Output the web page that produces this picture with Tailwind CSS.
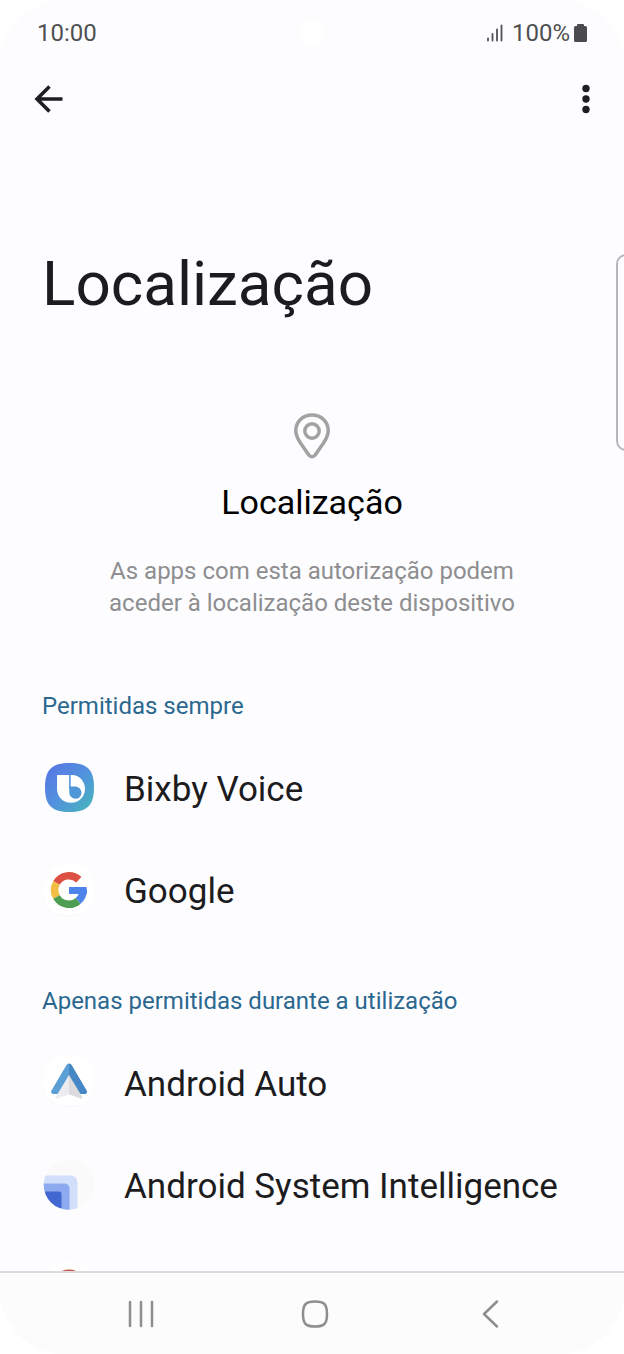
<!DOCTYPE html>
<html lang="pt">
<head>
<meta charset="utf-8">
<meta name="viewport" content="width=device-width, initial-scale=1">
<title>Localização</title>
<script src="https://cdn.jsdelivr.net/npm/@tailwindcss/browser@4"></script>
</head>
<body class="bg-white">
<div class="relative flex h-screen flex-col overflow-hidden rounded-[64px] bg-[#fdfdff] font-['Roboto',sans-serif] text-[#1c1c1e]">
  <header class="shrink-0">
    <div class="relative flex h-16 items-center justify-between px-[37px] pt-0.5 text-2xl text-[#505052]">
      <time>10:00</time>
      <span class="absolute left-1/2 size-6 -translate-x-1/2 rounded-full bg-white"></span>
      <div class="flex items-center">
        <svg class="mr-2 h-[18px] w-[18px]" viewBox="0 0 18 18" fill="none" stroke="#505052" stroke-width="1.8" stroke-linecap="round" aria-hidden="true"><path d="M2 14.500v2M6.500 10v6.500M11 5.500v11M15.500 1.500v15"/></svg>
        <span>100%</span>
        <svg class="ml-1 h-[18px] w-[13px]" viewBox="0 0 13 18" fill="#4b4b4d" aria-hidden="true"><path d="M4 0h5q1 0 1 1v1h1.500q1.500 0 1.500 1.500v13q0 1.500-1.500 1.500h-10Q0 18 0 16.500v-13Q0 2 1.500 2H3V1q0-1 1-1z"/></svg>
      </div>
    </div>
    <div class="flex h-[70px] items-center justify-between pl-7 pr-[18px]">
      <button type="button" aria-label="Voltar" class="flex size-10 items-center justify-center">
        <svg class="size-10" viewBox="0 0 40 40" fill="none" stroke="#1f1f21" stroke-width="3.600" aria-hidden="true"><path d="M34.500 20H9M21.500 7.500 9 20l12.500 12.500"/></svg>
      </button>
      <button type="button" aria-label="Mais opções" class="flex size-10 items-center justify-center">
        <svg class="size-10" viewBox="0 0 40 40" fill="#1f1f21" aria-hidden="true"><circle cx="20" cy="9.500" r="3.700"/><circle cx="20" cy="20" r="3.700"/><circle cx="20" cy="30.500" r="3.700"/></svg>
      </button>
    </div>
  </header>

  <main class="min-h-0 flex-1 overflow-hidden px-[42px] pt-[110px]">
    <h1 class="text-[62px] leading-20">Localização</h1>

    <section class="flex flex-col items-center pt-[86px] text-center">
      <svg class="h-[52px] w-11" viewBox="0 0 44 52" fill="none" stroke="#a2a2a2" stroke-width="3.500" stroke-linejoin="round" aria-hidden="true"><path d="M22 5C12.700 5 5.800 12 5.800 20.800c0 5 2.200 8.800 5.200 13L18.800 45c1.800 2.200 4.600 2.200 6.400 0L33 33.800c3-4.200 5.200-8 5.200-13C38.200 12 31.300 5 22 5z"/><circle cx="22" cy="21" r="7.200"/></svg>
      <h2 class="mt-4 text-[34px] leading-12 text-black">Localização</h2>
      <p class="mt-[29px] text-2xl leading-8 text-[#8e8e90]">As apps com esta autorização podem<br>aceder à localização deste dispositivo</p>
    </section>

    <section class="pt-[71px]">
      <h3 class="text-2xl leading-8 text-[#2b6890]">Permitidas sempre</h3>
      <ul class="pt-[15px]">
        <li><a href="#bixby" class="flex h-[102px] items-center gap-7">
          <svg class="size-[54px] shrink-0" viewBox="0 0 54 54" aria-hidden="true"><defs><linearGradient id="bx" x1="0" y1="0" x2="1" y2="1"><stop stop-color="#5973e4"/><stop offset=".5" stop-color="#5291de"/><stop offset="1" stop-color="#46b9b9"/></linearGradient></defs><path fill="url(#bx)" d="M27.500 2C45 2 52 8.500 52 26.500S45 51 27.500 51 3 44.500 3 26.500 10 2 27.500 2z"/><path fill="#fff" d="M15 14h12.400v14H30V14C37 14 43 20 43 27.800 43 36 37 41.700 29 41.700S15 36 15 27.500z"/><path fill="#5097d8" d="M27.300 14h1.400v14h-1.400z"/><path fill="#fff" d="M28.700 14H30v12h-1.300z"/><path fill="#5097d8" d="M27.300 25.600h5.900a6.100 6.100 0 1 1-5.900 6.100z"/></svg>
          <span class="pt-1 text-[35px]">Bixby Voice</span></a></li>
        <li><a href="#google" class="flex h-[102px] items-center gap-7">
          <svg class="size-[54px] shrink-0" viewBox="0 0 54 54" aria-hidden="true"><path fill="#f7f7f9" d="M27 3C45 3 52 10 52 28S45 53 27 53 2 46 2 28 9 3 27 3z"/><path fill="#fff" d="M27 2C45 2 52 9 52 27S45 52 27 52 2 45 2 27 9 2 27 2z"/><g fill="none" stroke-width="7.500"><path stroke="#dd5144" d="M36.800 16.700A14.200 14.200 0 0 0 14.500 20"/><path stroke="#f1bd42" d="M14.500 20a14.200 14.200 0 0 0 0 14"/><path stroke="#4c9e50" d="M14.500 34a14.200 14.200 0 0 0 21.700 3.800"/><path stroke="#4d83ea" d="M36.200 37.800A14.200 14.200 0 0 0 41.200 27"/></g><path fill="#4d83ea" d="M27 24h17.500q.7 3.800 0 7H27z"/></svg>
          <span class="pt-1 text-[35px]">Google</span></a></li>
      </ul>
    </section>

    <section class="pt-11">
      <h3 class="text-2xl leading-8 text-[#2b6890]">Apenas permitidas durante a utilização</h3>
      <ul class="pt-[15px]">
        <li><a href="#android-auto" class="flex h-[102px] items-center gap-7">
          <svg class="size-[54px] shrink-0" viewBox="0 0 54 54" aria-hidden="true"><path fill="#f7f7f9" d="M27 1C45 1 52 8 52 26S45 51 27 51 2 44 2 26 9 1 27 1z"/><path fill="#fff" d="M27 0C45 0 52 7 52 25S45 50 27 50 2 43 2 25 9 0 27 0z"/><path fill="#5b9fd6" d="M27 7.500q1.600 0 2.500 1.600l15 25.500q1.200 2.900-1.500 3.400h-6L27 22 17 38h-6q-2.700-.5-1.500-3.400l15-25.500Q25.400 7.500 27 7.500z"/><path fill="#4688c5" d="M27 7.500q1.600 0 2.500 1.600l15 25.500q1.200 2.900-1.500 3.400h-6L27 22z"/><path fill="#ededef" d="M27 19v19.500l-12.500 4.300q-1.500 0-.8-1.800z"/><path fill="#dcdcde" d="M27 19v19.500l12.500 4.300q1.500 0 .8-1.800z"/></svg>
          <span class="pt-1 text-[35px]">Android Auto</span></a></li>
        <li><a href="#system-intelligence" class="flex h-[102px] items-center gap-7">
          <svg class="size-[54px] shrink-0" viewBox="0 0 54 54" aria-hidden="true"><clipPath id="si"><circle cx="27" cy="26.500" r="25.300"/></clipPath><g clip-path="url(#si)"><path fill="#fafafa" d="M0 0h54v54H0z"/><path fill="#d2dffa" d="M0 17.500h28q7.500 0 7.500 7.500V54H0z"/><path fill="#8daaf0" d="M0 25.500h22q5.500 0 5.500 5.500V54H0z"/><path fill="#4267d0" d="M0 33.500h17q2.500 0 2.500 2.500V54H0z"/></g></svg>
          <span class="pt-1 text-[35px]">Android System Intelligence</span></a></li>
        <li><a href="#chrome" aria-label="Chrome" class="flex h-[102px] items-center gap-7">
          <svg class="size-[54px] shrink-0" viewBox="0 0 54 54" aria-hidden="true"><path fill="#fff" d="M27 2C45 2 52 9 52 27S45 52 27 52 2 45 2 27 9 2 27 2z"/><circle cx="27" cy="27" r="17.500" fill="#c9564d"/></svg></a></li>
      </ul>
    </section>
  </main>

  <div class="absolute top-[254px] -right-3 h-[197px] w-5 rounded-[10px] border-2 border-[#b7b7b9] bg-[#fdfdff]"></div>

  <nav class="flex h-[83px] shrink-0 items-center justify-between border-t-2 border-[#dcdcde] bg-[#fcfcfc] px-[117px]">
    <button type="button" aria-label="Recentes"><svg class="size-12" viewBox="0 0 48 48" fill="none" stroke="#8e8e8e" stroke-width="2.500" stroke-linecap="round" aria-hidden="true"><path d="M13 12v24M24 12v24M35 12v24"/></svg></button>
    <button type="button" aria-label="Início"><svg class="size-12" viewBox="0 0 48 48" fill="none" stroke="#8e8e8e" stroke-width="2.500" aria-hidden="true"><path d="M27 11.500c9 0 12 2.500 12 12.500s-3 12.500-12 12.500S15 34 15 24s3-12.500 12-12.500z"/></svg></button>
    <button type="button" aria-label="Retroceder"><svg class="size-12" viewBox="0 0 48 48" fill="none" stroke="#8e8e8e" stroke-width="2.500" stroke-linecap="round" stroke-linejoin="round" aria-hidden="true"><path d="M38 11.500 25 24l13 12.500"/></svg></button>
  </nav>
</div>
</body>
</html>
